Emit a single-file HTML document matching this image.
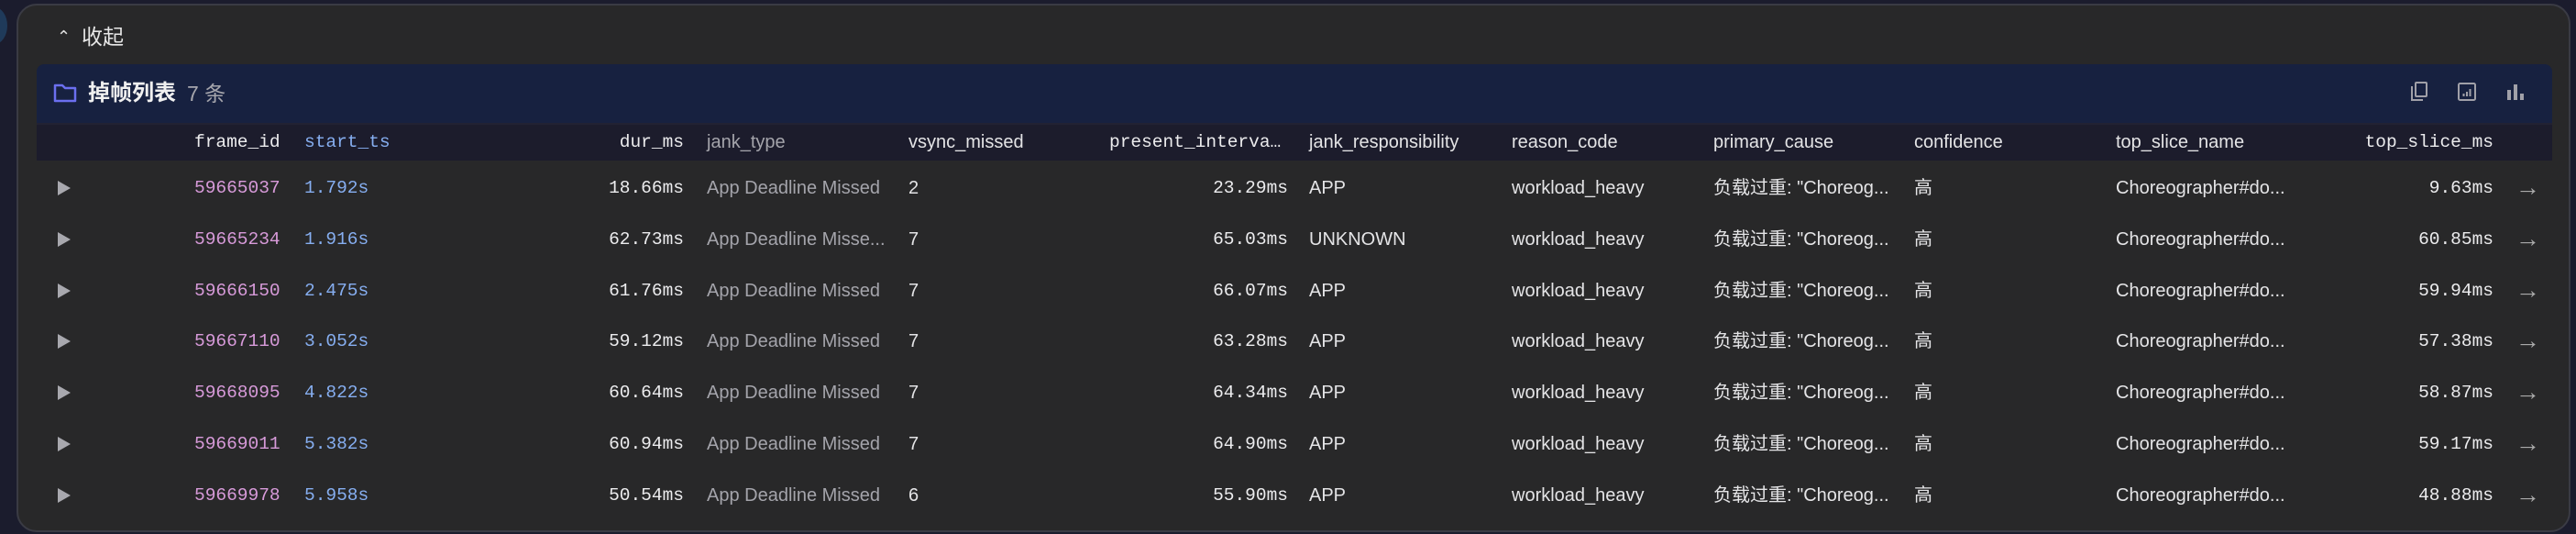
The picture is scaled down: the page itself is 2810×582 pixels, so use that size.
<!DOCTYPE html>
<html><head><meta charset="utf-8"><style>
*{margin:0;padding:0;box-sizing:border-box}
body{width:2810px;height:582px;background:#1b1c2d;overflow:hidden;position:relative;font-family:"Liberation Sans","Noto Sans CJK SC",sans-serif;color:#e4e4e6}
.card{position:absolute;left:18px;top:4px;width:2786px;height:576px;background:#282829;border:2px solid #3a3b44;border-radius:22px}
.t{position:absolute;white-space:nowrap;font-size:20px;line-height:24px}
.m{font-family:"Liberation Mono",monospace;font-size:19.5px;color:#ececee}
.r{text-align:right}
.band{position:absolute;left:40px;top:70px;width:2744px;height:64px;background:#172140;border-radius:8px 8px 0 0}
.hdr{position:absolute;left:40px;top:134px;width:2744px;height:41px;background:#1c1c2c;border-top:2px solid #222233}
.tri{position:absolute;width:0;height:0;border-left:14px solid #a8a8ae;border-top:8px solid transparent;border-bottom:8px solid transparent}
</style></head><body>
<div style="position:absolute;left:-20px;top:8px;width:28px;height:40px;border-radius:50%;background:#1f3a5a"></div>
<div class="card"></div>
<div class="t" style="left:62px;top:28px;font-size:18px;color:#ddd">&#8963;</div>
<div class="t" style="left:89px;top:26px;font-size:23px;line-height:28px;color:#e6e6e6">收起</div>
<div class="band"></div>
<svg style="position:absolute;left:58px;top:90px" width="26" height="22" viewBox="0 0 26 22"><path d="M2 3h8l3 3h11v14H2z" fill="none" stroke="#6b6ff0" stroke-width="2.5" stroke-linejoin="round"/></svg>
<div class="t" style="left:96px;top:88px;font-size:24px;line-height:28px;font-weight:bold;color:#f0f0f0">掉帧列表</div>
<div class="t" style="left:204px;top:88px;font-size:23px;line-height:28px;color:#a6a6ad">7 条</div>
<svg style="position:absolute;left:2628px;top:88px" width="22" height="24" viewBox="0 0 22 24" fill="none" stroke="#a0a0a8" stroke-width="2"><rect x="7" y="2" width="12" height="15" rx="1"/><path d="M3 6v15h12"/></svg>
<svg style="position:absolute;left:2680px;top:89px" width="22" height="22" viewBox="0 0 22 22" fill="none" stroke="#a0a0a8" stroke-width="2"><rect x="2" y="2" width="18" height="18" rx="1.5"/><path d="M7.5 16v-3M11 16v-5M14.5 16v-8"/></svg>
<svg style="position:absolute;left:2733px;top:89px" width="22" height="22" viewBox="0 0 22 22" fill="#a0a0a8"><rect x="2" y="9" width="4" height="11"/><rect x="9" y="3" width="4" height="17"/><rect x="16" y="13" width="4" height="7"/></svg>
<div class="hdr"></div>
<div class="t m" style="left:212px;top:143px">frame_id</div>
<div class="t m" style="left:332px;top:143px;color:#86aef0">start_ts</div>
<div class="t m r" style="left:600px;width:146px;top:143px">dur_ms</div>
<div class="t" style="left:771px;top:143px;color:#a4a4ab">jank_type</div>
<div class="t" style="left:991px;top:143px">vsync_missed</div>
<div class="t m" style="left:1210px;top:143px">present_interva…</div>
<div class="t" style="left:1428px;top:143px">jank_responsibility</div>
<div class="t" style="left:1649px;top:143px">reason_code</div>
<div class="t" style="left:1869px;top:143px">primary_cause</div>
<div class="t" style="left:2088px;top:143px">confidence</div>
<div class="t" style="left:2308px;top:143px">top_slice_name</div>
<div class="t m r" style="left:2520px;width:200px;top:143px">top_slice_ms</div>
<div id="rows"></div>
<script>
const d=[["59665037","1.792s","18.66ms","App Deadline Missed","2","23.29ms","APP","9.63ms"],
["59665234","1.916s","62.73ms","App Deadline Misse...","7","65.03ms","UNKNOWN","60.85ms"],
["59666150","2.475s","61.76ms","App Deadline Missed","7","66.07ms","APP","59.94ms"],
["59667110","3.052s","59.12ms","App Deadline Missed","7","63.28ms","APP","57.38ms"],
["59668095","4.822s","60.64ms","App Deadline Missed","7","64.34ms","APP","58.87ms"],
["59669011","5.382s","60.94ms","App Deadline Missed","7","64.90ms","APP","59.17ms"],
["59669978","5.958s","50.54ms","App Deadline Missed","6","55.90ms","APP","48.88ms"]];
let h="";
d.forEach((r,i)=>{const c=205+i*55.8;const y=c-12;
h+=`<div class="tri" style="left:63px;top:${c-8}px"></div>
<div class="t m" style="left:212px;top:${y}px;color:#d79ad9">${r[0]}</div>
<div class="t m" style="left:332px;top:${y}px;color:#86aef0">${r[1]}</div>
<div class="t m r" style="left:600px;width:146px;top:${y}px">${r[2]}</div>
<div class="t" style="left:771px;top:${y}px;color:#a4a4ab">${r[3]}</div>
<div class="t" style="left:991px;top:${y}px">${r[4]}</div>
<div class="t m r" style="left:1250px;width:155px;top:${y}px">${r[5]}</div>
<div class="t" style="left:1428px;top:${y}px">${r[6]}</div>
<div class="t" style="left:1649px;top:${y}px">workload_heavy</div>
<div class="t" style="left:1869px;top:${y}px">负载过重: "Choreog...</div>
<div class="t" style="left:2088px;top:${y}px">高</div>
<div class="t" style="left:2308px;top:${y}px">Choreographer#do...</div>
<div class="t m r" style="left:2560px;width:160px;top:${y}px">${r[7]}</div>
<div class="t" style="left:2744px;top:${y-4}px;color:#aaa;font-size:27px;line-height:30px">→</div>`;});
document.getElementById("rows").innerHTML=h;
</script>
</body></html>
